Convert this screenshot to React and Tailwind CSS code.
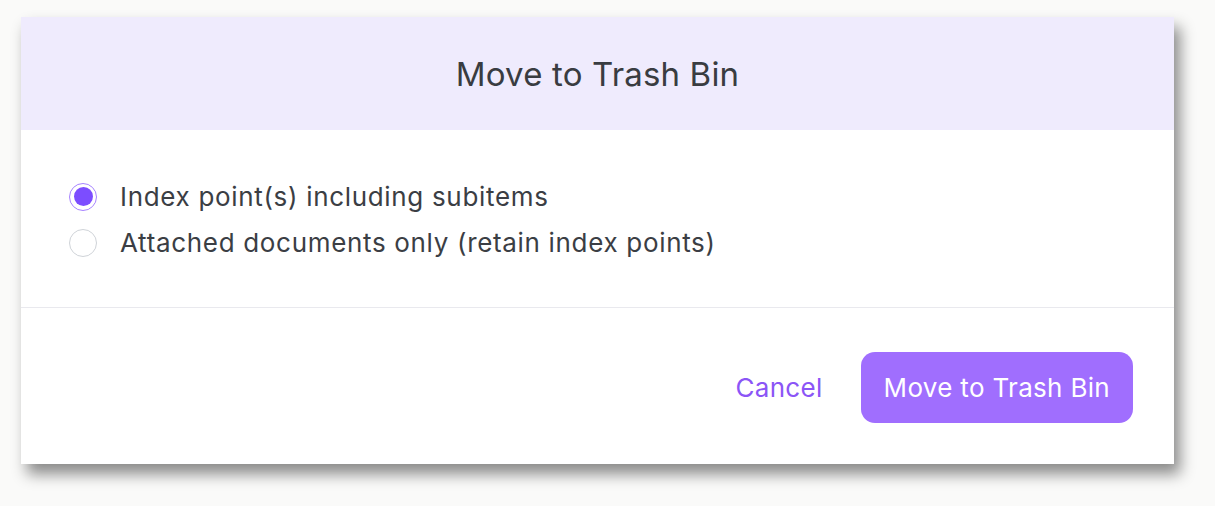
import { useState } from "react";

function Radio({ checked, label, onSelect }) {
  return (
    <label onClick={onSelect} className="flex cursor-pointer items-center gap-[23px]">
      {checked ? (
        <span className="flex h-[28px] w-[28px] items-center justify-center rounded-full border-[1.5px] border-[#a783ff] bg-white">
          <span className="h-[19px] w-[19px] rounded-full bg-[#7c4dff]" />
        </span>
      ) : (
        <span className="h-[28px] w-[28px] rounded-full border-[1.5px] border-[#cfd3d8] bg-white" />
      )}
      <span className="text-[26px] leading-[30px] tracking-[0.026em] text-[#3b3e44]">{label}</span>
    </label>
  );
}

export default function App() {
  const [choice, setChoice] = useState("index");

  return (
    <div className="min-h-[506px] w-full bg-[#fafaf9] pl-[21px] pt-[17px] font-['Inter',sans-serif]">
      <div className="w-[1153px] overflow-hidden bg-white shadow-[6px_10px_14px_rgba(0,0,0,0.45)]">
        <div className="flex h-[113px] items-center justify-center bg-[#efebfd]">
          <h1 className="text-[33px] leading-[36px] tracking-[0.005em] text-[#393c41]">Move to Trash Bin</h1>
        </div>

        <div className="flex h-[178px] flex-col justify-center gap-[16px] border-b border-[#e9e9ee] pl-[48px] pt-[2px]">
          <Radio
            checked={choice === "index"}
            label="Index point(s) including subitems"
            onSelect={() => setChoice("index")}
          />
          <Radio
            checked={choice === "docs"}
            label="Attached documents only (retain index points)"
            onSelect={() => setChoice("docs")}
          />
        </div>

        <div className="flex h-[156px] items-center justify-end gap-[38px] pr-[41px] pt-[2px]">
          <button className="text-[26px] tracking-[0.012em] text-[#8b55f6]">Cancel</button>
          <button className="h-[71px] rounded-[14px] bg-[#a06efe] px-[23px] text-[26px] tracking-[0.012em] text-white">
            Move to Trash Bin
          </button>
        </div>
      </div>
    </div>
  );
}
